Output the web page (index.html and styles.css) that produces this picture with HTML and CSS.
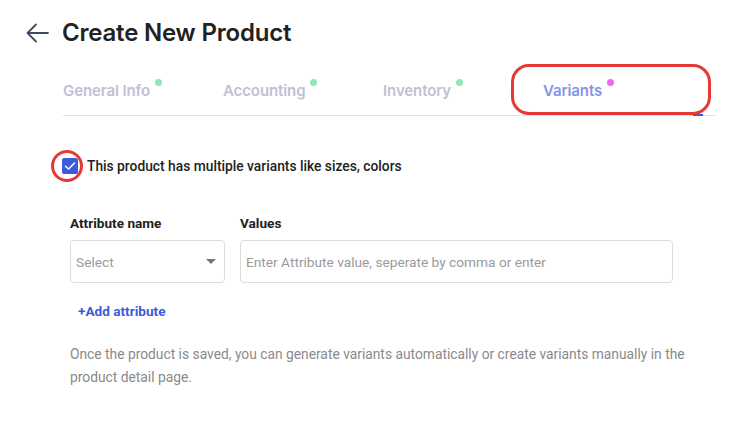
FILE: index.html
```html
<!DOCTYPE html>
<html>
<head>
<meta charset="utf-8">
<link rel="stylesheet" href="styles.css">
</head>
<body>
<div class="page">
  <div class="header">
    <svg class="back" width="24" height="20" viewBox="0 0 24 20"><path d="M11 1.5 L2.5 10 L11 18.5 M2.5 10 H23" fill="none" stroke="#3e4a66" stroke-width="1.8" stroke-linecap="round" stroke-linejoin="round"/></svg>
    <h1 class="title">Create New Product</h1>
  </div>
  <div class="tabs">
    <div class="tab"><span class="tab-label">General Info</span><span class="dot green"></span></div>
    <div class="tab"><span class="tab-label">Accounting</span><span class="dot green"></span></div>
    <div class="tab"><span class="tab-label">Inventory</span><span class="dot green"></span></div>
    <div class="tab active"><span class="tab-label">Variants</span><span class="dot pink"></span></div>
    <div class="tab-ink"></div>
    <div class="ring-rect"></div>
  </div>
  <div class="content">
    <label class="check-row">
      <span class="checkbox"><svg width="12" height="10" viewBox="0 0 12 10"><path d="M1.5 5.2 L4.6 8 L10.5 2" fill="none" stroke="#fff" stroke-width="1.5" stroke-linecap="round" stroke-linejoin="round"/></svg></span>
      <span class="check-text">This product has multiple variants like sizes, colors</span>
      <span class="ring-circle"></span>
    </label>
    <div class="attr-grid">
      <div class="field">
        <div class="field-label">Attribute name</div>
        <div class="select"><span>Select</span><span class="caret"></span></div>
      </div>
      <div class="field grow">
        <div class="field-label">Values</div>
        <div class="input"><span>Enter Attribute value, seperate by comma or enter</span></div>
      </div>
    </div>
    <div class="add-attr">+Add attribute</div>
    <p class="note">Once the product is saved, you can generate variants automatically or create variants manually in the product detail page.</p>
  </div>
</div>
</body>
</html>
```

FILE: styles.css
```css
* { box-sizing: border-box; }
html, body { margin: 0; padding: 0; background: #fff; }
body { font-family: Roboto, "Liberation Sans", sans-serif; color: #222; }
.page { width: 751px; height: 431px; overflow: hidden; }

.header { display: flex; align-items: center; padding: 19px 0 0 25px; gap: 13px; }
.back { display: block; }
.title { margin: 0; font-family: Inter, Roboto, sans-serif; font-weight: 600; font-size: 24px; line-height: 28px; color: #222; letter-spacing: -0.2px; }

.tabs { position: relative; display: flex; margin: 21px 0 0 63px; width: 652px; height: 48px; border-bottom: 1px solid #e2e2e6; }
.tab { width: 160px; display: flex; align-items: flex-start; padding-top: 14px; }
.tab-label { font-family: Inter, Roboto, sans-serif; font-weight: 600; font-size: 15px; line-height: 18px; color: #c0c0d6; letter-spacing: -0.1px; }
.tab.active .tab-label { color: #8495e6; }
.dot { width: 7px; height: 7px; border-radius: 50%; margin: -3px 0 0 5px; }
.dot.green { background: #8ee8b0; }
.dot.pink { background: #ec6ce8; }
.tab-ink { position: absolute; left: 630px; bottom: -1px; width: 10px; height: 2px; background: #3b5bdb; }
.ring-rect { position: absolute; left: 448px; top: -4px; width: 200px; height: 51px; border: 3px solid #e53935; border-radius: 18px; }

.content { padding: 42px 0 0 62px; }
.check-row { position: relative; display: flex; align-items: center; gap: 9px; }
.checkbox { width: 16px; height: 16px; background: #3d5bd9; border-radius: 2px; display: flex; align-items: center; justify-content: center; }
.checkbox svg { display: block; }
.check-text { font-size: 13.8px; font-weight: 500; color: #222; }
.ring-circle { position: absolute; left: -11px; top: -8px; width: 32px; height: 32px; border: 3px solid #e53935; border-radius: 50%; }

.attr-grid { display: flex; gap: 15px; margin: 41px 0 0 8px; width: 603px; }
.field { width: 155px; }
.field.grow { flex: 1; }
.field-label { font-size: 13.6px; font-weight: 700; line-height: 16px; color: #222; margin-bottom: 9px; }
.select, .input { height: 43px; border: 1px solid #dcdcdc; border-radius: 4px; display: flex; align-items: center; padding: 0 8px 0 5px; font-size: 13.7px; color: #9a9a9a; }
.select { justify-content: space-between; }
.caret { width: 0; height: 0; border-left: 5px solid transparent; border-right: 5px solid transparent; border-top: 5px solid #777; margin-right: 0; }

.add-attr { margin: 20px 0 0 16px; font-size: 13.6px; font-weight: 700; color: #3d5bd9; }
.note { margin: 24px 0 0 8px; width: 640px; font-size: 13.8px; line-height: 23px; color: #8a8a8a; }
```
